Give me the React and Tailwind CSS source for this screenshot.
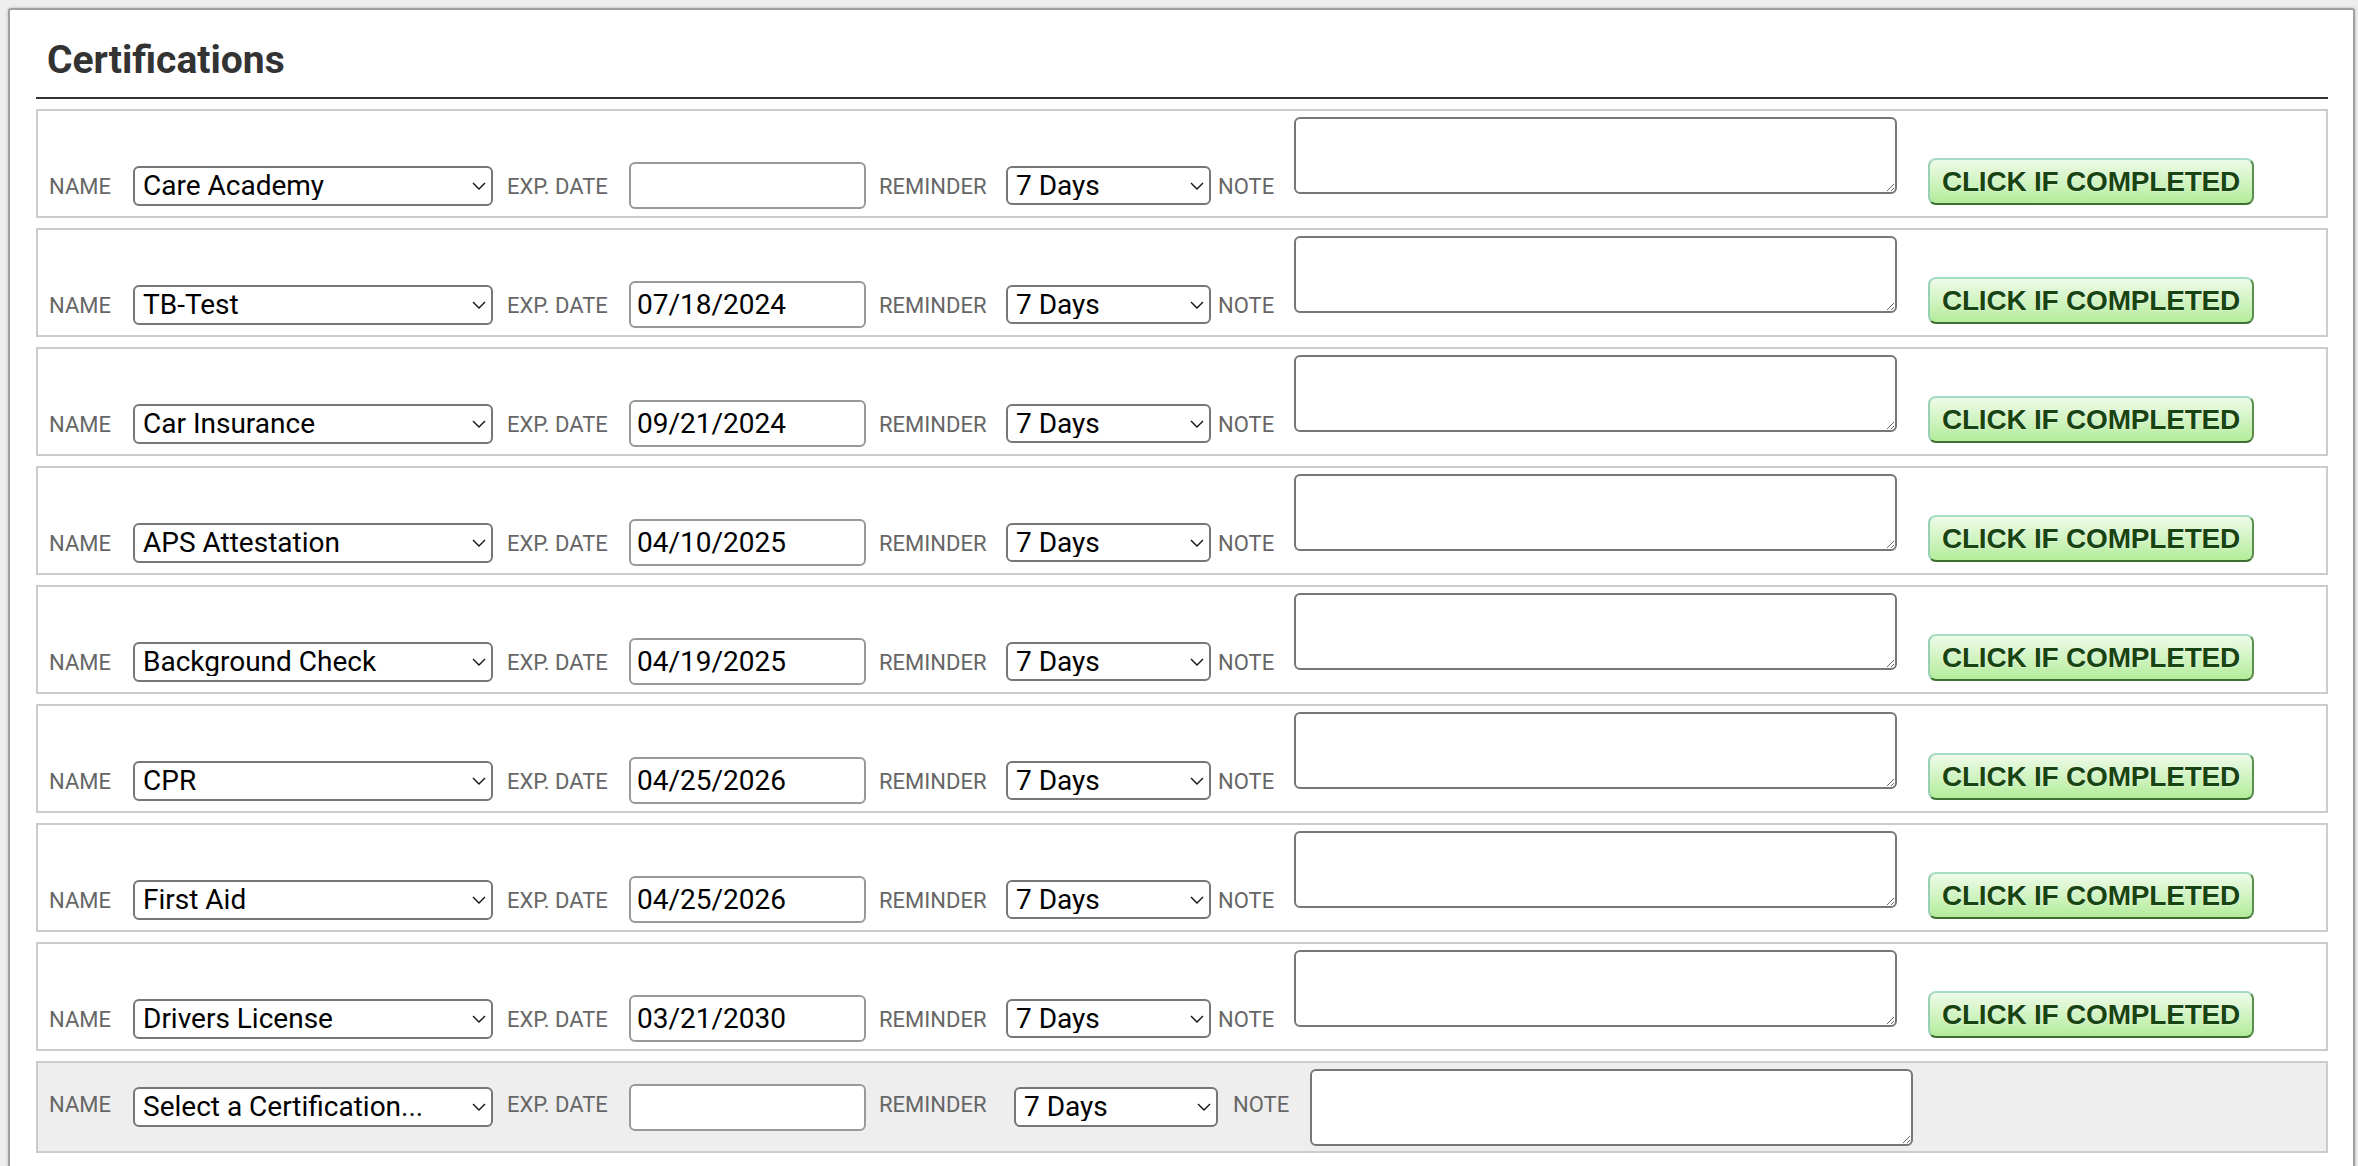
import React from "react";

const certs = [
  { name: "Care Academy", date: "" },
  { name: "TB-Test", date: "07/18/2024" },
  { name: "Car Insurance", date: "09/21/2024" },
  { name: "APS Attestation", date: "04/10/2025" },
  { name: "Background Check", date: "04/19/2025" },
  { name: "CPR", date: "04/25/2026" },
  { name: "First Aid", date: "04/25/2026" },
  { name: "Drivers License", date: "03/21/2030" },
];

const Chevron = () => (
  <svg className="pointer-events-none absolute right-[7px] top-1/2 -translate-y-1/2" width="14" height="8" viewBox="0 0 14 8" fill="none">
    <path d="M1 1l6 6 6-6" stroke="#111" strokeWidth="1.4" />
  </svg>
);

const Select = ({ value, className }) => (
  <div className={`relative shrink-0 ${className}`}>
    <select
      defaultValue={value}
      className="h-full w-full appearance-none rounded-[6px] border-2 border-[#777] bg-white pl-[8px] pr-6 text-[28px] leading-none text-black"
    >
      <option>{value}</option>
    </select>
    <Chevron />
  </div>
);

const Label = ({ children, className }) => (
  <span className={`shrink-0 text-[22px] leading-[22px] text-[#666] ${className}`}>{children}</span>
);

const CertRow = ({ cert }) => (
  <div className="flex h-[109px] items-start border-2 border-[#ccc] bg-white pl-[11px]">
    <Label className="mt-[65px] w-[84px]">NAME</Label>
    <Select value={cert.name} className="mt-[55px] h-[40px] w-[360px]" />
    <Label className="mt-[65px] ml-[14px] w-[122px]">EXP. DATE</Label>
    <input
      defaultValue={cert.date}
      className="mt-[51px] h-[47px] w-[237px] shrink-0 rounded-[6px] border-2 border-[#999] bg-white pl-[6px] text-[28px] text-black"
    />
    <Label className="mt-[65px] ml-[13px] w-[127px]">REMINDER</Label>
    <Select value="7 Days" className="mt-[55px] h-[39px] w-[205px]" />
    <Label className="mt-[65px] ml-[7px] w-[76px]">NOTE</Label>
    <textarea className="mt-[6px] h-[77px] w-[603px] shrink-0 resize rounded-[6px] border-2 border-[#777] bg-white" />
    <button className="ml-[31px] mt-[47px] flex h-[47px] w-[326px] shrink-0 items-center justify-center rounded-[8px] border-2 border-t-[#a6dcc6] border-l-[#98d0b6] border-r-[#5b8d4c] border-b-[#3e6e31] bg-gradient-to-b from-[#eefbe8] to-[#b3ec9a] font-['Liberation_Sans',Arial,sans-serif] text-[28px] font-bold tracking-[-0.2px] text-[#174410] [text-shadow:0_0_2px_#fff]">
      CLICK IF COMPLETED
    </button>
  </div>
);

const NewRow = () => (
  <div className="flex h-[92px] items-center border-2 border-[#ccc] bg-[#eee] pl-[11px]">
    <Label className="mb-[4px] w-[84px]">NAME</Label>
    <Select value="Select a Certification..." className="h-[40px] w-[360px]" />
    <Label className="mb-[4px] ml-[14px] w-[122px]">EXP. DATE</Label>
    <input className="h-[47px] w-[237px] shrink-0 rounded-[6px] border-2 border-[#999] bg-white pl-[6px] text-[28px]" />
    <Label className="mb-[4px] ml-[13px] w-[135px]">REMINDER</Label>
    <Select value="7 Days" className="h-[40px] w-[204px]" />
    <Label className="mb-[4px] ml-[15px] w-[77px]">NOTE</Label>
    <textarea className="h-[77px] w-[603px] shrink-0 resize rounded-[6px] border-2 border-[#777] bg-white" />
  </div>
);

export default function App() {
  return (
    <div className="min-h-screen bg-[#eee] pt-[8px] pl-[8px] pr-[3px] font-['Roboto',sans-serif]">
      <div className="rounded-[3px] border-2 border-[#a0a0a0] bg-white pl-[26px] pr-[25px] pb-[40px] shadow-[0_0_3px_rgba(0,0,0,0.25)]">
        <div className="mt-[31px] border-b-2 border-[#333] pb-[17px] pl-[11px]">
          <h2 className="text-[39px] font-bold leading-[39px] text-[#333]">Certifications</h2>
        </div>
        <div className="mt-[10px] flex flex-col gap-[10px]">
          {certs.map((c) => (
            <CertRow key={c.name} cert={c} />
          ))}
          <NewRow />
        </div>
      </div>
    </div>
  );
}
